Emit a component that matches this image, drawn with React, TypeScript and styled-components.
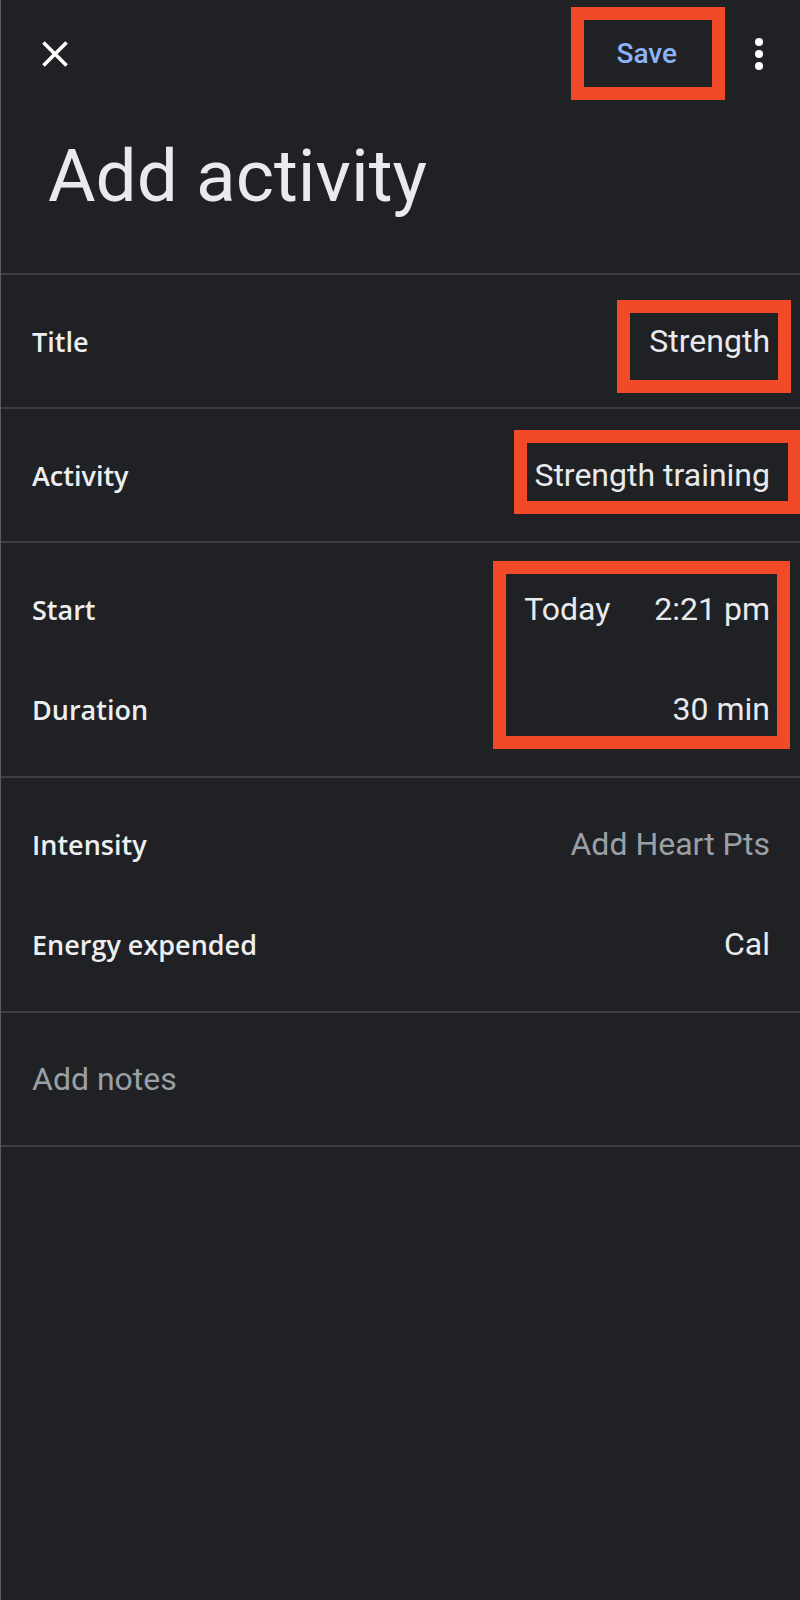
import React from "react";
import styled, { createGlobalStyle } from "styled-components";

const GlobalStyle = createGlobalStyle`
  html, body {
    margin: 0;
    padding: 0;
    background: #202124;
  }
  * { box-sizing: border-box; }
`;

const Page = styled.div`
  min-height: 1600px;
  width: 800px;
  background: #202124;
  border-left: 1px solid #5a5c60;
  color: #e8eaed;
  font-family: Roboto, "Liberation Sans", sans-serif;
  overflow: hidden;
`;

const Header = styled.header`
  border-bottom: 2px solid #3d3e42;
`;

const TopBar = styled.div`
  display: flex;
  align-items: center;
  justify-content: space-between;
  height: 108px;
  padding: 0 17px 0 32px;
`;

const IconButton = styled.button<{ $size: number }>`
  display: flex;
  align-items: center;
  justify-content: center;
  width: ${(p) => p.$size}px;
  height: ${(p) => p.$size}px;
  padding: 0;
  border: none;
  background: none;
  color: #ffffff;
  svg {
    width: ${(p) => p.$size}px;
    height: ${(p) => p.$size}px;
    display: block;
  }
`;

const Actions = styled.div`
  display: flex;
  align-items: center;
  gap: 42px;
`;

const SaveButton = styled.button`
  position: relative;
  height: 48px;
  padding: 0 16px;
  border: none;
  background: none;
  font-family: Roboto, "Liberation Sans", sans-serif;
  font-weight: 500;
  font-size: 28px;
  line-height: 48px;
  color: #8ab4f8;
`;

const Mark = styled.span<{ $top: number; $bottom: number; $right: number; $width: number }>`
  position: absolute;
  top: ${(p) => p.$top}px;
  bottom: ${(p) => p.$bottom}px;
  right: ${(p) => p.$right}px;
  width: ${(p) => p.$width}px;
  border: 13px solid #f04a28;
  pointer-events: none;
`;

const Title = styled.h1`
  margin: 0;
  padding: 32px 0 60px 47px;
  font-family: Roboto, "Liberation Sans", sans-serif;
  font-weight: 400;
  font-size: 73px;
  line-height: 73px;
  color: #e8eaed;
`;

const Section = styled.section<{ $padBottom?: number }>`
  display: flex;
  justify-content: space-between;
  padding: 16px 30px ${(p) => p.$padBottom ?? 16}px 31px;
  border-bottom: 2px solid #3d3e42;
`;

const LabelColumn = styled.div`
  display: flex;
  flex-direction: column;
`;

const ValueColumn = styled.div`
  position: relative;
  display: flex;
  flex-direction: column;
  align-items: flex-end;
`;

const Label = styled.div`
  display: flex;
  align-items: center;
  height: 100px;
  font-family: "Open Sans", "Liberation Sans", sans-serif;
  font-weight: 600;
  font-size: 27px;
  color: #eceef0;
`;

const Value = styled.div<{ $muted?: boolean }>`
  display: flex;
  align-items: center;
  gap: 44px;
  height: 100px;
  font-family: Roboto, "Liberation Sans", sans-serif;
  font-weight: 400;
  font-size: 32px;
  color: ${(p) => (p.$muted ? "#9aa0a6" : "#e8eaed")};
`;

const CloseIcon = () => (
  <svg viewBox="0 0 24 24" fill="currentColor">
    <path d="M19 6.41L17.59 5 12 10.59 6.41 5 5 6.41 10.59 12 5 17.59 6.41 19 12 13.41 17.59 19 19 17.59 13.41 12z" />
  </svg>
);

const MoreIcon = () => (
  <svg viewBox="0 0 24 24" fill="currentColor">
    <circle cx="12" cy="6" r="2" />
    <circle cx="12" cy="12" r="2" />
    <circle cx="12" cy="18" r="2" />
  </svg>
);

type MarkBox = { top: number; bottom: number; right: number; width: number };

type Field = {
  labels: string[];
  values: { parts: string[]; muted?: boolean }[];
  mark?: MarkBox;
  padBottom?: number;
};

const fields: Field[] = [
  {
    labels: ["Title"],
    values: [{ parts: ["Strength"] }],
    mark: { top: 9, bottom: -2, right: -21, width: 174 },
  },
  {
    labels: ["Activity"],
    values: [{ parts: ["Strength training"] }],
    mark: { top: 5, bottom: 11, right: -31, width: 287 },
  },
  {
    labels: ["Start", "Duration"],
    values: [{ parts: ["Today", "2:21 pm"] }, { parts: ["30 min"] }],
    mark: { top: 2, bottom: 10, right: -20, width: 297 },
    padBottom: 17,
  },
  {
    labels: ["Intensity", "Energy expended"],
    values: [{ parts: ["Add Heart Pts"], muted: true }, { parts: ["Cal"] }],
    padBottom: 17,
  },
];

export default function App() {
  return (
    <>
      <GlobalStyle />
      <Page>
        <Header>
          <TopBar>
            <IconButton $size={44} aria-label="Close">
              <CloseIcon />
            </IconButton>
            <Actions>
              <SaveButton>
                Save
                <Mark $top={-23} $bottom={-22} $right={-32} $width={154} />
              </SaveButton>
              <IconButton $size={48} aria-label="More options">
                <MoreIcon />
              </IconButton>
            </Actions>
          </TopBar>
          <Title>Add activity</Title>
        </Header>

        {fields.map((f, i) => (
          <Section key={i} $padBottom={f.padBottom}>
            <LabelColumn>
              {f.labels.map((l) => (
                <Label key={l}>{l}</Label>
              ))}
            </LabelColumn>
            <ValueColumn>
              {f.values.map((v, j) => (
                <Value key={j} $muted={v.muted}>
                  {v.parts.map((p) => (
                    <span key={p}>{p}</span>
                  ))}
                </Value>
              ))}
              {f.mark && (
                <Mark
                  $top={f.mark.top}
                  $bottom={f.mark.bottom}
                  $right={f.mark.right}
                  $width={f.mark.width}
                />
              )}
            </ValueColumn>
          </Section>
        ))}

        <Section>
          <Value $muted>Add notes</Value>
        </Section>
      </Page>
    </>
  );
}
